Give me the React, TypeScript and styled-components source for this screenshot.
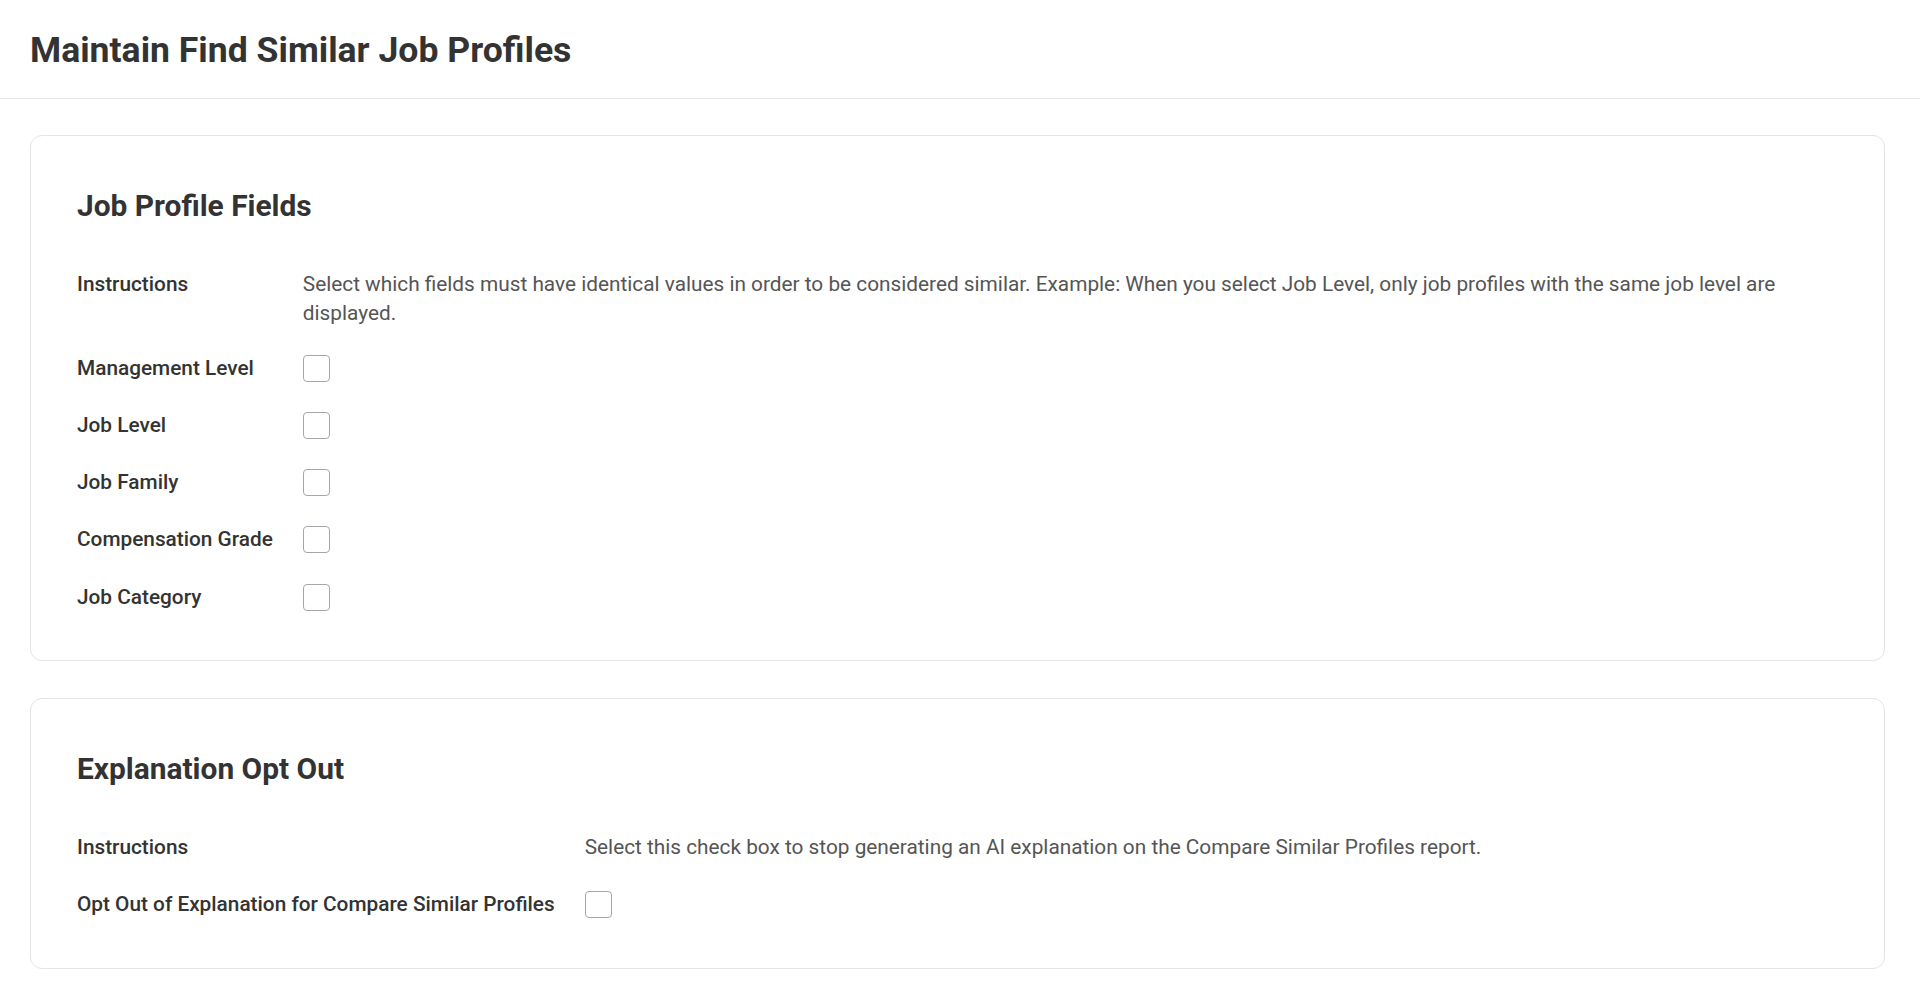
import React from 'react'
import styled, { createGlobalStyle } from 'styled-components'

const GlobalStyle = createGlobalStyle`
  body {
    margin: 0;
    background: #ffffff;
    font-family: Roboto, "Liberation Sans", Arial, sans-serif;
    color: #333333;
  }
`

const Header = styled.header`
  height: 99px;
  box-sizing: border-box;
  display: flex;
  align-items: center;
  padding: 2px 0 0 30px;
  border-bottom: 1px solid #e3e4e8;
`

const PageTitle = styled.h1`
  margin: 0;
  font-size: 35.6px;
  font-weight: 700;
  color: #333333;
  line-height: 1.2;
`

const Main = styled.main`
  display: flex;
  flex-direction: column;
  gap: 37px;
  padding: 36px 35px 36px 30px;
`

const Card = styled.section`
  border: 1px solid #e3e4e8;
  border-radius: 12px;
  padding: 52px 46px 49px;
  background: #ffffff;
`

const CardTitle = styled.h2`
  margin: 0 0 46px;
  font-size: 29.9px;
  font-weight: 700;
  line-height: 1.2;
  color: #333333;
`

const FieldGrid = styled.div`
  display: grid;
  grid-template-columns: max-content 1fr;
  column-gap: 30px;
  row-gap: 28.4px;
  align-items: start;
`

const Label = styled.div`
  font-size: 20.8px;
  font-weight: 500;
  line-height: 28.8px;
  color: #333333;
`

const Text = styled.div<{ $wrapped?: boolean }>`
  font-size: 20.8px;
  font-weight: 400;
  line-height: 28.8px;
  color: #555555;
  margin-bottom: ${(p) => (p.$wrapped ? '-2px' : '0')};
`

const CheckCell = styled.div`
  height: 28.8px;
  display: flex;
  align-items: center;
`

const Checkbox = styled.input.attrs({ type: 'checkbox' })`
  appearance: none;
  margin: 0;
  width: 27px;
  height: 27px;
  border: 1.5px solid #a3a7ac;
  border-radius: 4px;
  background: #ffffff;
  box-sizing: border-box;
  cursor: pointer;

  &:checked {
    background: #0875e1;
    border-color: #0875e1;
  }
`

const jobFields = [
  'Management Level',
  'Job Level',
  'Job Family',
  'Compensation Grade',
  'Job Category',
]

export default function App() {
  return (
    <>
      <GlobalStyle />
      <Header>
        <PageTitle>Maintain Find Similar Job Profiles</PageTitle>
      </Header>
      <Main>
        <Card>
          <CardTitle>Job Profile Fields</CardTitle>
          <FieldGrid>
            <Label>Instructions</Label>
            <Text $wrapped>
              Select which fields must have identical values in order to be considered similar. Example: When you
              select Job Level, only job profiles with the same job level are displayed.
            </Text>
            {jobFields.map((f) => (
              <React.Fragment key={f}>
                <Label>{f}</Label>
                <CheckCell>
                  <Checkbox aria-label={f} />
                </CheckCell>
              </React.Fragment>
            ))}
          </FieldGrid>
        </Card>
        <Card>
          <CardTitle>Explanation Opt Out</CardTitle>
          <FieldGrid>
            <Label>Instructions</Label>
            <Text>
              Select this check box to stop generating an AI explanation on the Compare Similar Profiles report.
            </Text>
            <Label>Opt Out of Explanation for Compare Similar Profiles</Label>
            <CheckCell>
              <Checkbox aria-label="Opt Out of Explanation for Compare Similar Profiles" />
            </CheckCell>
          </FieldGrid>
        </Card>
      </Main>
    </>
  )
}
